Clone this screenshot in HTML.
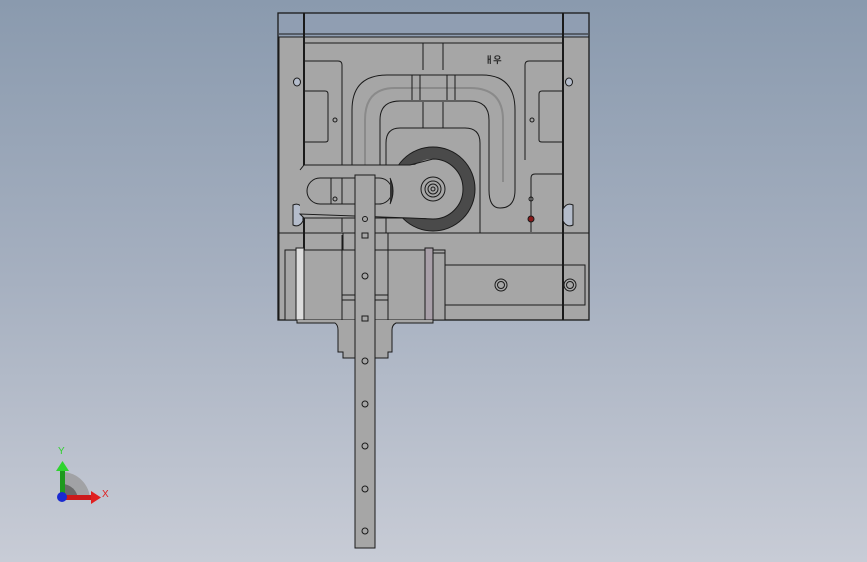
<!DOCTYPE html>
<html><head><style>
html,body{margin:0;padding:0;width:867px;height:562px;overflow:hidden}
body{background:linear-gradient(#8a9aae 0%,#a6b0c0 50%,#c8ccd6 100%)}
svg{position:absolute;left:0;top:0}
</style></head><body>
<svg width="867" height="562" viewBox="0 0 867 562" fill="none" stroke="#1a1a1a" stroke-width="1">
<rect x="278" y="13" width="311" height="24" fill="#909eb2"/>
<line x1="279" y1="34" x2="588" y2="34"/>
<rect x="279" y="37" width="310" height="283" fill="#a6a6a6"/>
<rect x="278" y="13" width="311" height="307" stroke-width="1.3"/>
<line x1="304" y1="13" x2="304" y2="320" stroke-width="2"/>
<line x1="563" y1="13" x2="563" y2="320" stroke-width="2"/>
<line x1="304" y1="43" x2="563" y2="43"/>
<line x1="279" y1="233" x2="589" y2="233"/>
<path d="M304 61 H338 Q342 61 342 65 V232"/>
<path d="M304 91 H325 Q328 91 328 94 V140 Q328 142 325 142 H304"/>
<path d="M563 61 H529 Q525 61 525 65 V160"/>
<path d="M563 91 H542 Q539 91 539 94 V140 Q539 142 542 142 H563"/>
<path d="M563 174 H535 Q531 174 531 178 V232"/>
<ellipse cx="297" cy="82" rx="3.5" ry="4" fill="#b4bccb"/>
<ellipse cx="569" cy="82" rx="3.5" ry="4" fill="#b4bccb"/>
<circle cx="335" cy="120" r="2"/><circle cx="532" cy="120" r="2"/>
<circle cx="531" cy="199" r="2"/><circle cx="531" cy="219" r="3" fill="#8a1a1a"/>
<path d="M293 205 v20 q6 3 10-4 v-12 q-4-7-10-4z" fill="#b4bccb"/>
<path d="M573 205 v20 q-6 3-10-4 v-12 q4-7 10-4z" fill="#b4bccb"/>
<path d="M352 165 V110 Q352 75 387 75 H482 Q515 75 515 110 V190 Q515 208 500 208 Q489 208 489 190 V120 Q489 101 470 101 H400 Q380 101 380 120 V165"/>
<path d="M365 165 V120 Q365 88 395 88 H470 Q503 88 503 120 V182" stroke="#8a8a8a" stroke-width="2"/>
<path d="M423 43 V70 M443 43 V70 M423 102 V128 M443 102 V128"/>
<path d="M412 75 V100 M420 75 V100 M447 75 V100 M455 75 V100"/>
<path d="M386 233 V143 Q386 128 400 128 H465 Q480 128 480 143 V233"/>
<text x="485" y="63" font-family="Liberation Sans,sans-serif" font-size="9" font-weight="bold" fill="#222" stroke="none">ㅐ우</text>
<!-- ring -->
<circle cx="433" cy="189" r="36" stroke="#4a4a4a" stroke-width="12"/>
<circle cx="433" cy="189" r="42"/>
<!-- arm -->
<path d="M300 170 L304 165 H433 A30 30 0 0 1 433 219 L433 218 H304 L300 214 Z" fill="#a6a6a6" stroke="none"/>
<path d="M300 170 L304 165 H410 M410 218 H304 L300 214 Z"/>
<path d="M410 165 L433 159 A30 30 0 0 1 433 219 L410 218"/>
<rect x="307" y="178" width="85" height="26" rx="13"/>
<line x1="331" y1="178" x2="331" y2="204"/><line x1="342" y1="178" x2="342" y2="204"/>
<circle cx="366" cy="191" r="6"/>
<path d="M390 178 q6 13 0 26" fill="#333"/>
<circle cx="433" cy="189" r="12" fill="#a6a6a6"/>
<circle cx="433" cy="189" r="8"/><circle cx="433" cy="189" r="5"/><circle cx="433" cy="189" r="2"/>
<circle cx="335" cy="199" r="2"/>
<!-- lower -->
<rect x="343" y="233" width="45" height="125" fill="#a6a6a6"/>
<rect x="285" y="250" width="160" height="70" fill="#a6a6a6"/>
<rect x="296" y="248" width="8" height="72" fill="#dcdcdc"/>
<rect x="425" y="248" width="8" height="72" fill="#a89fa8"/>
<rect x="433" y="253" width="12" height="67"/>
<line x1="342" y1="235" x2="342" y2="320"/><line x1="388" y1="235" x2="388" y2="320"/>
<line x1="342" y1="295" x2="388" y2="295"/><line x1="342" y1="300" x2="388" y2="300"/>
<rect x="445" y="265" width="140" height="40"/>
<circle cx="501" cy="285" r="6"/><circle cx="501" cy="285" r="3.5"/>
<circle cx="570" cy="285" r="6"/><circle cx="570" cy="285" r="3.5"/>
<path d="M297 320 V323 H335 Q338 325 338 330 V352 H343 V358 H388 V352 H392 V330 Q392 325 396 323 H433 V320" fill="#a6a6a6"/>
<rect x="355" y="175" width="20" height="373" fill="#a6a6a6"/>
<g fill="#a6a6a6">
<circle cx="365" cy="219" r="2.5"/><circle cx="365" cy="276" r="3"/><circle cx="365" cy="361" r="3"/>
<circle cx="365" cy="404" r="3"/><circle cx="365" cy="446" r="3"/><circle cx="365" cy="489" r="3"/><circle cx="365" cy="531" r="3"/>
<rect x="362" y="233" width="6" height="5"/><rect x="362" y="316" width="6" height="5"/>
</g>
<g stroke="none">
<path d="M62 500 V472 A28 28 0 0 1 90 500 Z" fill="#9a9a9a" opacity="0.8"/>
<path d="M62 500 V484 A16 16 0 0 1 78 500 Z" fill="#6a6a6a"/>
<rect x="60" y="470" width="5" height="30" fill="#1e9a1e"/>
<path d="M56 471 L62.5 461 L69 471 Z" fill="#2fd42f"/>
<rect x="62" y="495" width="30" height="5" fill="#cc1a1a"/>
<path d="M91 491 L101 497.5 L91 504 Z" fill="#e02020"/>
<circle cx="62" cy="497" r="5" fill="#1a2ad0"/>
</g>
<text x="58" y="454" font-family="Liberation Sans,sans-serif" font-size="10" fill="#30d030" stroke="none">Y</text>
<text x="102" y="497" font-family="Liberation Sans,sans-serif" font-size="10" fill="#e02020" stroke="none">X</text>
</svg>
</body></html>
